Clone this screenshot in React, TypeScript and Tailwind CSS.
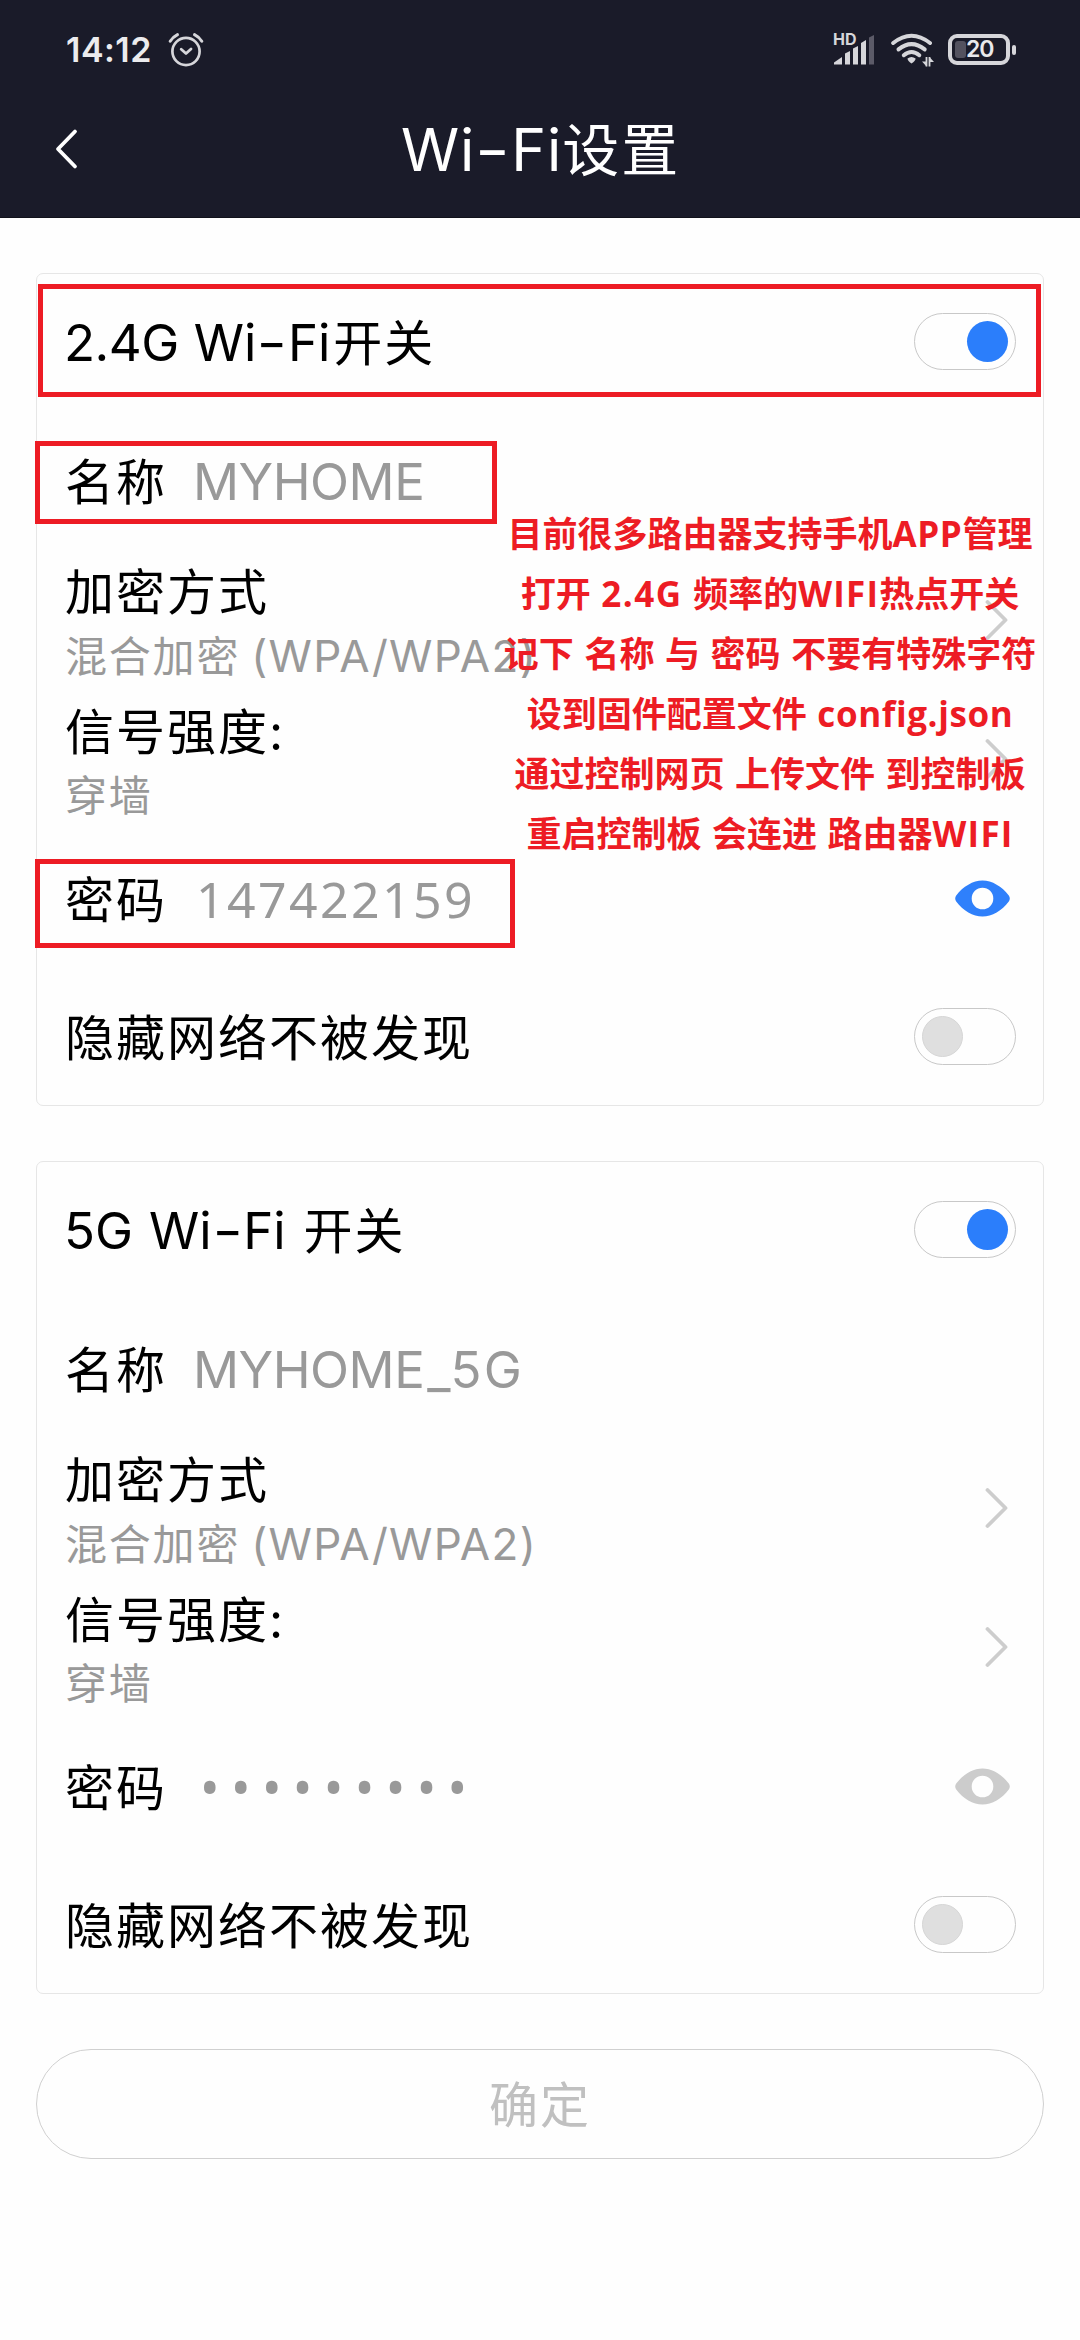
import type { ReactNode } from "react";

function AlarmIcon() {
  return (
    <svg width="36" height="36" viewBox="0 0 36 36" fill="none" stroke="#d6d6da" strokeLinecap="round" strokeLinejoin="round">
      <circle cx="18" cy="19.5" r="13.6" strokeWidth="2.7" />
      <path d="M13.2 17.2l4.8 4.3 5-4.5" strokeWidth="2.8" />
      <path d="M2.2 9.2Q4.8 5 9.5 2.6M33.8 9.2Q31.2 5 26.5 2.6" strokeWidth="3" />
    </svg>
  );
}

function SignalIcon() {
  return (
    <svg width="42" height="30" viewBox="0 0 42 30" fill="#d6d6da">
      <path d="M1 29.500v-2l8-5.500v7.500z" />
      <path d="M12 29.500v-11l5-2.500v13.500z" />
      <path d="M20 29.500v-16l5-2.500v18.500z" />
      <path d="M28 29.500v-21.500l5-3v24.500z" />
      <path d="M36 29.500v-27l5-2.500v29.500z" fill="#5c5b68" />
    </svg>
  );
}

function WifiIcon() {
  return (
    <svg width="44" height="36" viewBox="0 0 44 36" fill="none" stroke="#d6d6da" strokeLinecap="round" strokeWidth="4">
      <path d="M3.200 11Q21.500 -3.500 40 11" />
      <path d="M8.500 17.400Q21.500 6.800 34.700 17.400" />
      <path d="M13.800 23.200Q21.500 16.800 29.300 23.200" />
      <path d="M17.500 26.500Q21.500 23.400 25.600 26.500Q25.500 29 21.500 31.500Q17.600 29 17.500 26.500z" fill="#d6d6da" stroke="none" />
      <path d="M36.500 25v9.500M39.500 34.500v-9.500" strokeWidth="1.800" strokeLinecap="butt" />
      <path d="M32 29.500h4.500v5zM44 30h-4.500v-5z" fill="#d6d6da" stroke="none" />
    </svg>
  );
}

function Battery() {
  return (
    <div className="flex items-center gap-[2px]">
      <div className="flex h-[31px] w-[62px] items-center rounded-[9px] border-4 border-[#d6d6da] pl-[3px]">
        <div className="h-[17px] w-[11px] rounded-[3px] bg-[#53525f]" />
        <span className="text-[23px] leading-[23px] font-semibold tracking-[-1px] text-[#e9e9ec]">20</span>
      </div>
      <div className="h-[10px] w-[4px] rounded-full bg-[#d6d6da]" />
    </div>
  );
}

function Dash({ className }: { className: string }) {
  return <span className={"inline-block scale-x-[1.3] " + className}>-</span>;
}

function Toggle({ on }: { on: boolean }) {
  return (
    <div className={"mb-px flex h-[57px] w-[102px] shrink-0 items-center rounded-full border border-[#c8c8c8] px-[7px] " + (on ? "justify-end" : "justify-start")}>
      <div className={"size-[41px] rounded-full " + (on ? "bg-[#2b7efb]" : "border border-[#d6d6d6] bg-[#dfdfdf]")} />
    </div>
  );
}

function Chevron() {
  return (
    <svg className="mr-[8px]" width="23" height="42" viewBox="0 0 23 42" fill="none" stroke="#cdcdcd" strokeWidth="3.800" strokeLinecap="round" strokeLinejoin="round">
      <path d="M2.500 3L20.500 21L2.500 39" />
    </svg>
  );
}

function Eye({ color }: { color: string }) {
  return (
    <svg className="mr-[6px]" width="55" height="37" viewBox="0 0 55 37" fill={color}>
      <path fillRule="evenodd" d="M27.500 0.500C37 0.500 47 6.500 53.800 15.500Q55.800 18.500 53.800 21.500C47 30.500 37 36.500 27.500 36.500S8 30.500 1.200 21.500Q-0.800 18.500 1.200 15.500C8 6.500 18 0.500 27.500 0.500zM27.500 7.700a10.800 10.800 0 1 0 0 21.600a10.800 10.800 0 1 0 0-21.600z" />
    </svg>
  );
}

function DetailRow({ title, children }: { title: string; children: ReactNode }) {
  return (
    <div className="flex h-[139px] items-center justify-between">
      <div className="pt-[10px]">
        <div className="text-[49px] leading-[64px] tracking-[2px] text-black">{title}</div>
        <div className="text-[42px] leading-[62px] tracking-[1.800px] text-[#999999]">{children}</div>
      </div>
      <Chevron />
    </div>
  );
}

type CardProps = { title: ReactNode; name: ReactNode; password: ReactNode; visible: boolean };

function WifiCard({ title, name, password, visible }: CardProps) {
  return (
    <section className="mx-[36px] rounded-[7px] border border-[#e6e6e6] pr-[27px] pl-[28px] text-[49px] leading-[64px] text-black">
      <div className="flex h-[136px] items-center justify-between">
        <div className="pt-[2px]">{title}</div>
        <Toggle on />
      </div>
      <div className="flex h-[140px] items-center pt-[4px]">
        <div className="w-[128px] pt-[2px] tracking-[2px]">名称</div>
        <div className="text-[51px] text-[#999999]">{name}</div>
      </div>
      <DetailRow title="加密方式">
        混合加密<span className="ml-[11px] text-[44px] tracking-[1.300px]">(WPA/WPA2)</span>
      </DetailRow>
      <DetailRow title="信号强度:">穿墙</DetailRow>
      <div className="flex h-[140px] items-center justify-between">
        <div className="flex items-center pt-[2px]">
          <div className="w-[131px] pt-[4px] tracking-[2px]">密码</div>
          <div className="font-['Noto_Sans'] text-[50px] text-[#999999]">{password}</div>
        </div>
        <Eye color={visible ? "#2f80fb" : "#cccccc"} />
      </div>
      <div className="flex h-[137px] items-center justify-between">
        <div className="pt-[5px] tracking-[2px]">隐藏网络不被发现</div>
        <Toggle on={false} />
      </div>
    </section>
  );
}

const note: ReactNode[] = [
  <>目前很多路由器支持手机<span className="tracking-[0.600px]">APP</span>管理</>,
  <>打开 <span className="tracking-[1.500px]">2.4G</span> 频率的<span className="tracking-[1.200px]">WIFI</span>热点开关</>,
  <>记下 名称 与 密码 不要有特殊字符</>,
  <>设到固件配置文件 <span className="tracking-[0.600px]">config.json</span></>,
  <>通过控制网页 上传文件 到控制板</>,
  <>重启控制板 会连进 路由器<span className="tracking-[1.200px]">WIFI</span></>,
];

export default function App() {
  return (
    <div className="relative h-[2340px] w-[1080px] overflow-hidden bg-[#fefefe] font-['Inter','Noto_Sans_CJK_SC',sans-serif] whitespace-nowrap">
      <header className="h-[218px] border-b border-[#11121b] bg-[#1a1b29]">
        <div className="flex h-[82px] items-center justify-between pt-[17px] pr-[64px] pl-[66px]">
          <div className="flex items-center gap-[16px]">
            <span className="text-[34px] font-semibold tracking-[0.500px] text-[#ececee]">14:12</span>
            <AlarmIcon />
          </div>
          <div className="flex items-center">
            <div className="relative mr-[15px]">
              <span className="absolute top-[-4px] left-0 text-[16px] leading-[16px] font-bold text-[#d6d6da]">HD</span>
              <SignalIcon />
            </div>
            <div className="mr-[14px]"><WifiIcon /></div>
            <Battery />
          </div>
        </div>
        <div className="grid h-[136px] grid-cols-[401px_1fr] items-center">
          <svg className="ml-[54px]" width="24" height="44" viewBox="0 0 24 44" fill="none" stroke="#ffffff" strokeWidth="3.800" strokeLinecap="round" strokeLinejoin="round">
            <path d="M21 3.500L4 21L21 38.500" />
          </svg>
          <h1 className="text-[57px] leading-[70px] tracking-[2px] text-white">
            <span className="text-[59px] tracking-[0.900px]">Wi<Dash className="mx-[4px]" />Fi</span>设置
          </h1>
        </div>
      </header>

      <main className="flex flex-col gap-[55px] pt-[55px]">
        <WifiCard
          title={<><span className="ml-[-1px] text-[51px] tracking-[-0.500px]">2.4G</span><span className="ml-[15px] text-[51px]">Wi<Dash className="mx-[4px]" />Fi</span><span className="ml-[3px] tracking-[2px]">开关</span></>}
          name={<span className="tracking-[-0.500px]">MYHOME</span>}
          password={<span className="tracking-[2.400px]">147422159</span>}
          visible
        />
        <WifiCard
          title={<><span className="ml-[-1px] text-[51px]">5G</span><span className="ml-[16px] text-[51px]">Wi<Dash className="mx-[4px]" />Fi</span><span className="ml-[18px] tracking-[2px]">开关</span></>}
          name={<><span className="tracking-[-0.500px]">MYHOME</span><span className="ml-[3px] tracking-[2.300px]">_5G</span></>}
          password={<span className="ml-[4px] text-[52px] tracking-[11.400px]">•••••••••</span>}
          visible={false}
        />
        <button className="mx-[36px] h-[110px] rounded-full border border-[#d0d0d0] pt-[3px] text-[49px] leading-[64px] tracking-[2px] text-[#c0c0c0]">
          确定
        </button>
      </main>

      <div className="absolute top-[284px] left-[38px] h-[113px] w-[1003px] border-[5px] border-[#ed1c24]" />
      <div className="absolute top-[441px] left-[35px] h-[83px] w-[462px] border-[5px] border-[#ed1c24]" />
      <div className="absolute top-[859px] left-[35px] h-[89px] w-[480px] border-[5px] border-[#ed1c24]" />
      <div className="absolute top-[504px] left-[470px] w-[600px] text-center font-['Open_Sans','Noto_Sans_CJK_SC',sans-serif] text-[35px] leading-[60px] font-bold [word-spacing:1.500px] text-[#ed1c24]">
        {note.map((line, i) => (
          <p key={i}>{line}</p>
        ))}
      </div>
    </div>
  );
}
